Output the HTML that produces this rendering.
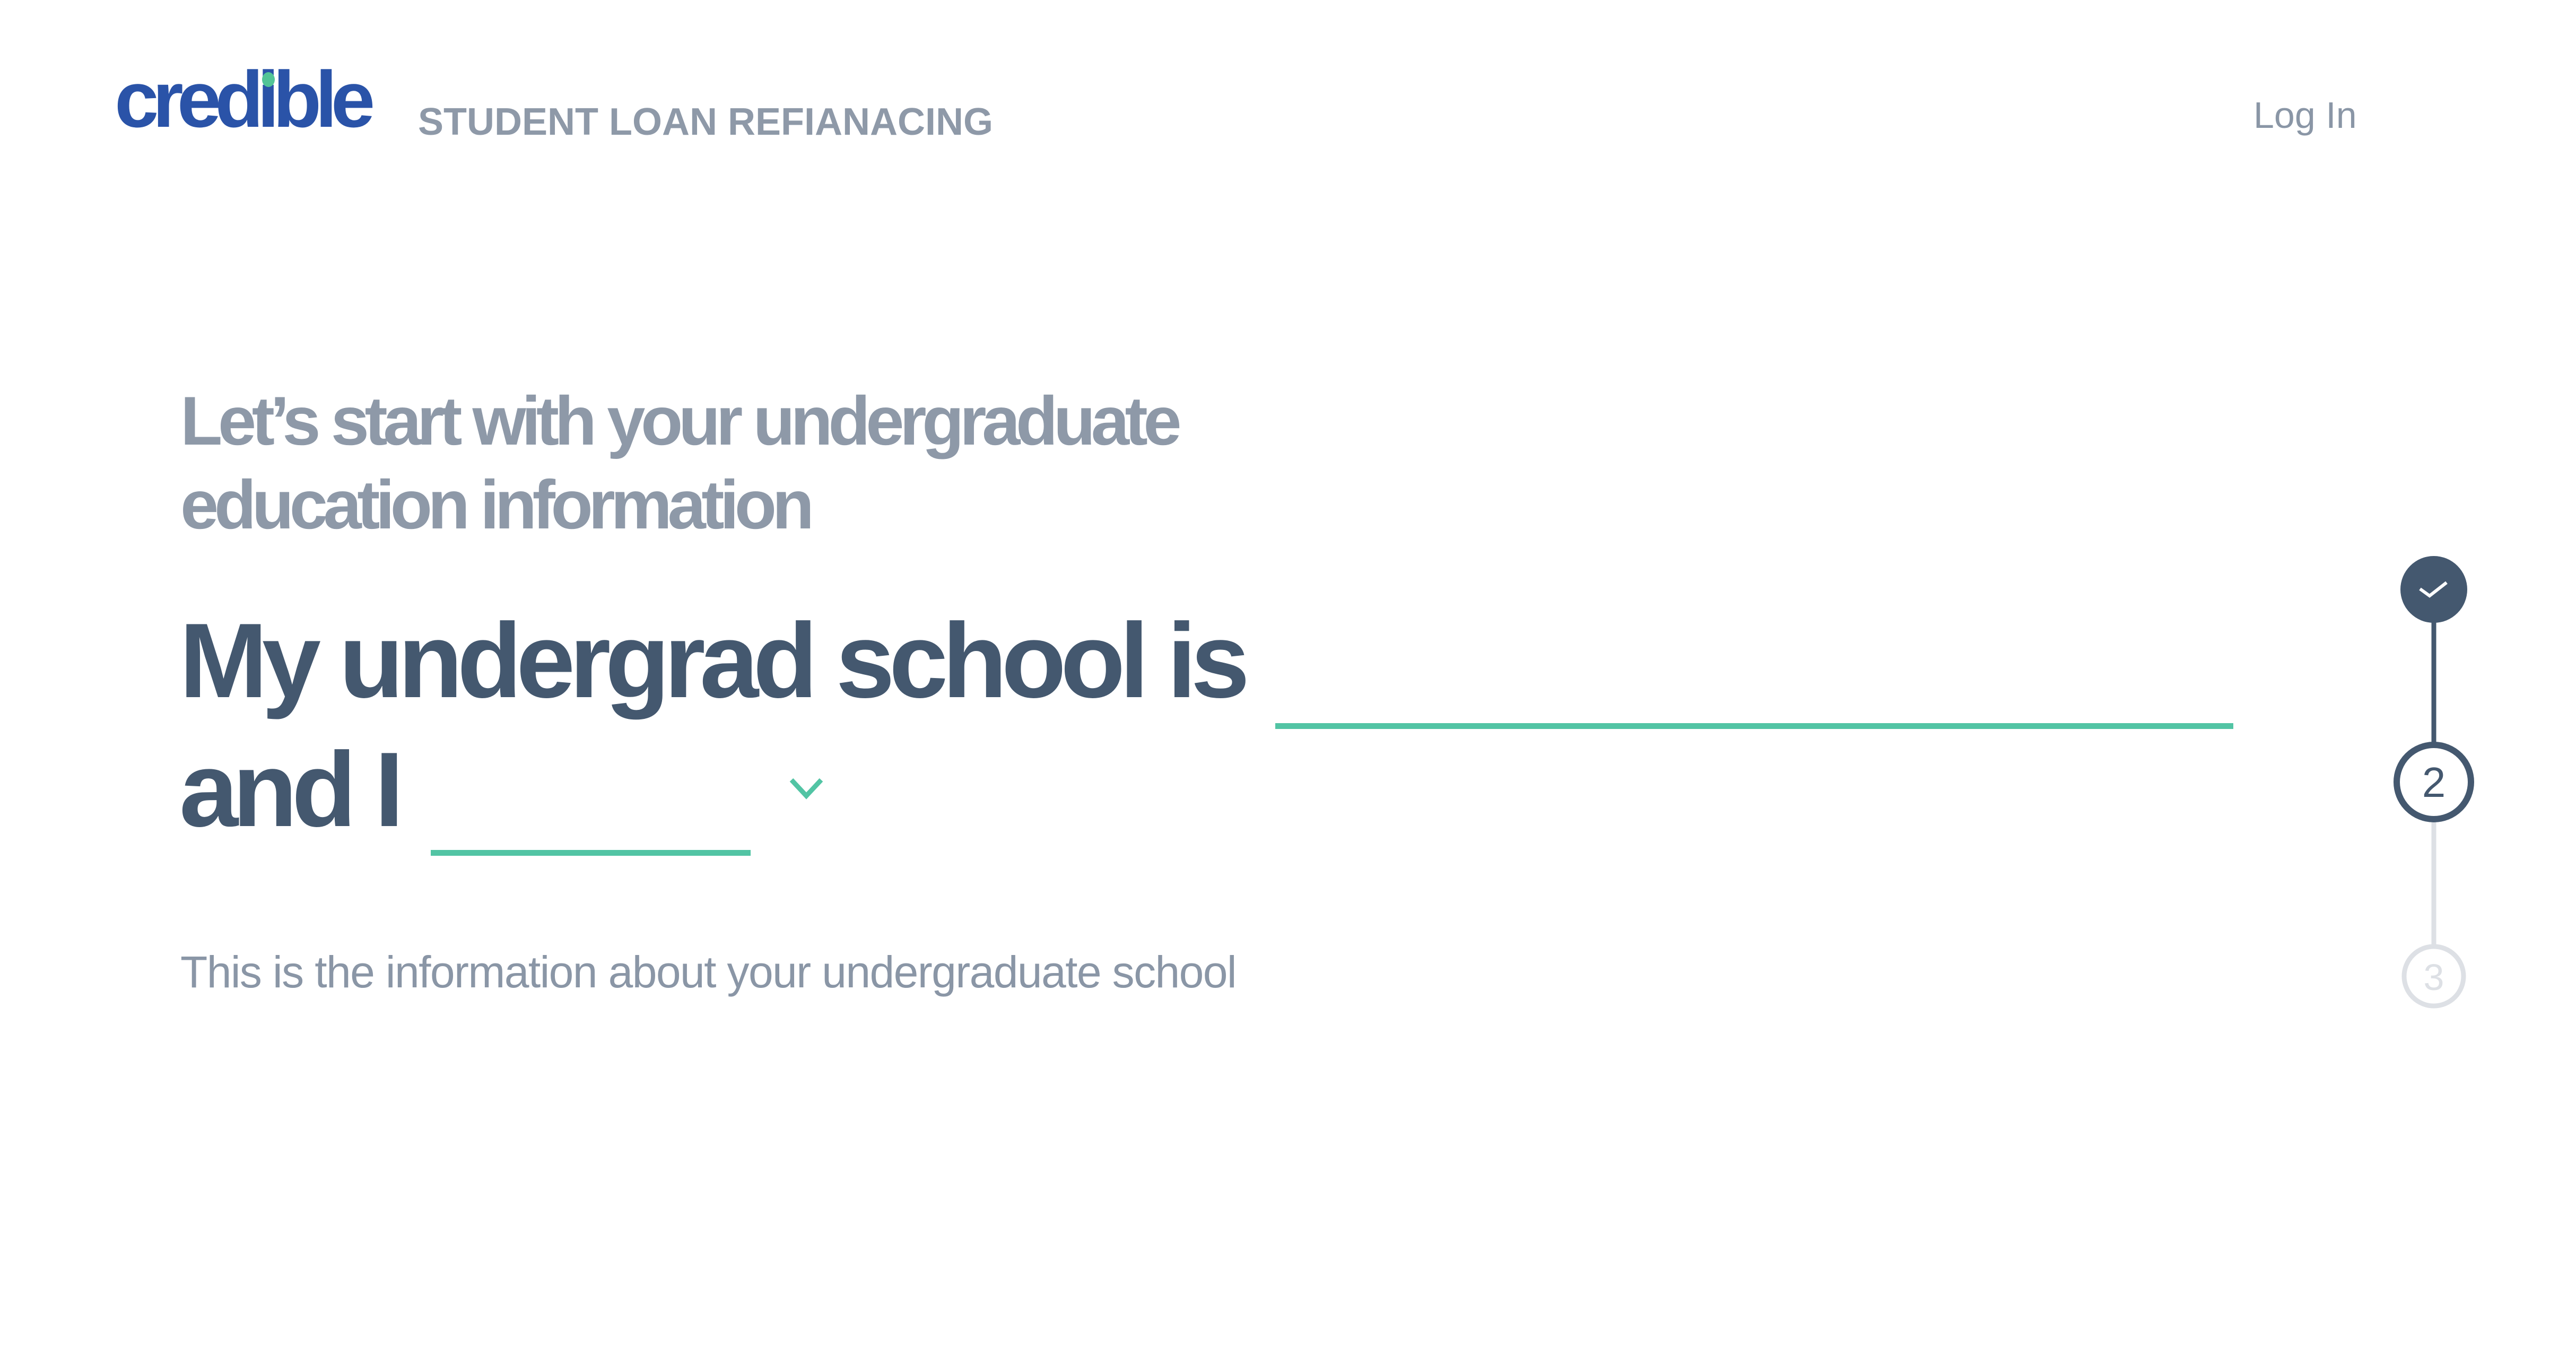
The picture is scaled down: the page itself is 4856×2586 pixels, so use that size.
<!DOCTYPE html>
<html><head><meta charset="utf-8"><style>
html,body{margin:0;padding:0;background:#fff;}
body{width:4856px;height:2586px;position:relative;overflow:hidden;font-family:"Liberation Sans",Arial,sans-serif;}
.a{position:absolute;white-space:nowrap;line-height:1;}
</style></head><body>
<div class="a" style="left:216px;top:112px;font-size:150px;font-weight:bold;color:#2a53a8;letter-spacing:-12px;">credible</div>
<div style="position:absolute;left:494px;top:136px;width:24px;height:28px;border-radius:50%;background:#52c496;"></div>
<div class="a" style="left:788px;top:194px;font-size:72px;font-weight:bold;color:#8e99a8;letter-spacing:0px;">STUDENT LOAN REFIANACING</div>
<div class="a" style="left:4248px;top:182px;font-size:70px;color:#8a96a6;">Log In</div>

<div class="a" style="left:340px;top:728px;font-size:130px;font-weight:bold;color:#8e99a8;letter-spacing:-8.5px;">Let’s start with your undergraduate</div>
<div class="a" style="left:340px;top:886px;font-size:130px;font-weight:bold;color:#8e99a8;letter-spacing:-8.5px;">education information</div>

<div class="a" style="left:338px;top:1146px;font-size:200px;font-weight:bold;color:#44586f;letter-spacing:-10.8px;">My undergrad school is</div>
<div class="a" style="left:338px;top:1389px;font-size:200px;font-weight:bold;color:#44586f;letter-spacing:-10.8px;">and I</div>
<div style="position:absolute;left:2404px;top:1363px;width:1806px;height:11px;background:#52c4a4;"></div>
<div style="position:absolute;left:812px;top:1602px;width:603px;height:11px;background:#52c4a4;"></div>
<svg style="position:absolute;left:1484px;top:1462px" width="72" height="50" viewBox="0 0 72 50"><path d="M8 8 L36 38 L64 8" fill="none" stroke="#52c4a4" stroke-width="9"/></svg>

<div class="a" style="left:340px;top:1790px;font-size:84px;color:#8a96a6;letter-spacing:-1.6px;">This is the information about your undergraduate school</div>

<svg style="position:absolute;left:4478px;top:1030px" width="220" height="900" viewBox="4500 1040 220 900">
<line x1="4610" y1="1121" x2="4610" y2="1410" stroke="#44586f" stroke-width="9"/>
<line x1="4610" y1="1555" x2="4610" y2="1790" stroke="#dde0e5" stroke-width="9"/>
<circle cx="4610" cy="1121" r="63" fill="#44586f"/>
<path d="M4584 1120 L4602 1133 L4634 1108" fill="none" stroke="#fff" stroke-width="6"/>
<circle cx="4610" cy="1484" r="70" fill="#fff" stroke="#44586f" stroke-width="12"/>
<text x="4610" y="1512" text-anchor="middle" font-family="Liberation Sans,sans-serif" font-size="80" fill="#44586f">2</text>
<circle cx="4610" cy="1850" r="56" fill="#fff" stroke="#dde0e5" stroke-width="9"/>
<text x="4610" y="1876" text-anchor="middle" font-family="Liberation Sans,sans-serif" font-size="70" fill="#dde0e5">3</text>
</svg>
</body></html>
